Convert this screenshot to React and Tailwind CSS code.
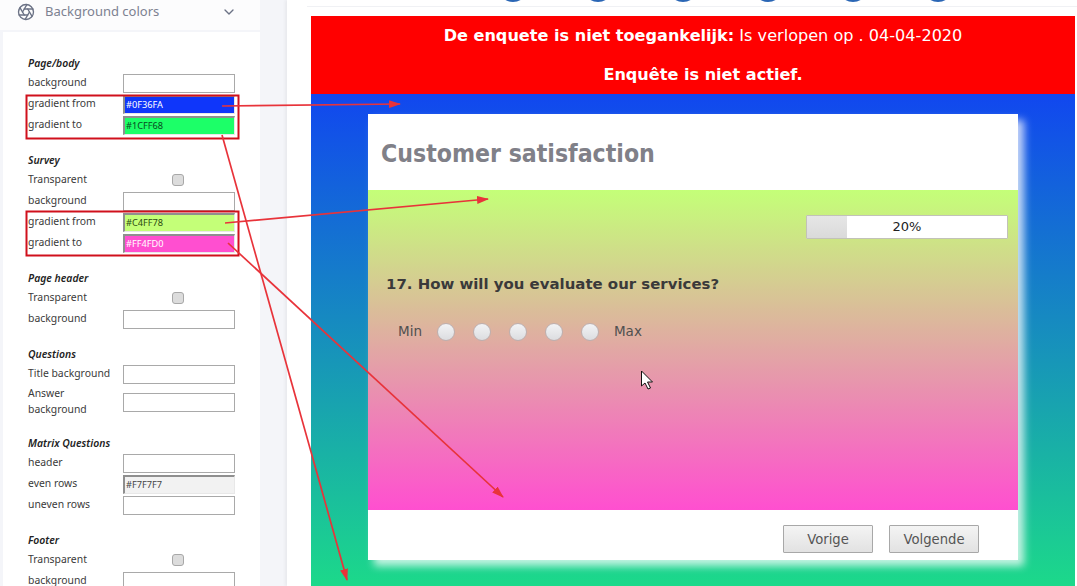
import { Aperture, ChevronDown } from "lucide-react";

function Field({ label, value, bg, text, tall }) {
  if (tall) {
    return (
      <div className="flex items-start h-[34px]">
        <div className="w-[95px] pt-[1px] leading-[16px]">{label}</div>
        <div className="w-[112px] h-[19px] mt-[9px] bg-white border border-[#a9a9a9]"></div>
      </div>
    );
  }
  return (
    <div className="flex items-end h-[21px] relative">
      <div className="w-[95px] h-[21px] flex items-center">{label}</div>
      {value ? (
        <div className={`w-[112px] h-[19px] flex items-center pl-[1px] text-[9.2px] border-t-2 border-l-2 border-t-[#8f8f8f] border-l-[#8f8f8f] border-r border-b border-r-[#e8e8e8] border-b-[#e8e8e8] ${bg} ${text}`}>
          {value}
        </div>
      ) : (
        <div className="w-[112px] h-[19px] bg-white border border-[#a9a9a9]"></div>
      )}
    </div>
  );
}

function Check() {
  return (
    <div className="flex items-center h-[21px]">
      <div className="w-[95px]">Transparent</div>
      <div className="w-[110px] flex justify-center">
        <div className="w-[12px] h-[12px] rounded-[3px] bg-[#dcdcdc] border border-[#a8a8a8]"></div>
      </div>
    </div>
  );
}

function Section({ title, children }) {
  return (
    <div className="mb-[17px]">
      <div className="h-[17px] leading-[17px] italic font-semibold text-[#222]">{title}</div>
      {children}
    </div>
  );
}

function Sidebar() {
  return (
    <div className="w-[257px] ml-[3px] shrink-0 text-[10.4px] text-[#3a3a3a] font-['Noto_Sans',sans-serif]">
      <div className="h-[30px] -ml-[3px] bg-[#fcfcfd] flex items-center justify-between pl-[17px] pr-[23px] pb-[6px] mb-[2px]">
        <div className="flex items-center gap-[10px]">
          <Aperture className="w-[18px] h-[18px] text-[#6b7285]" strokeWidth={1.8} />
          <span className="text-[13px] text-[#7c8191]">Background colors</span>
        </div>
        <ChevronDown className="w-[16px] h-[16px] text-[#6b7285]" />
      </div>
      <div className="bg-white pl-[25px] pt-[23px] pb-[20px]">
        <Section title="Page/body">
          <Field label="background" />
          <Field label="gradient from" value="#0F36FA" bg="bg-[#0f36fa]" text="text-white" />
          <Field label="gradient to" value="#1CFF68" bg="bg-[#1cff68]" text="text-[#0a4a20]" />
        </Section>
        <Section title="Survey">
          <Check />
          <Field label="background" />
          <Field label="gradient from" value="#C4FF78" bg="bg-[#c4ff78]" text="text-[#2c4a10]" />
          <Field label="gradient to" value="#FF4FD0" bg="bg-[#ff4fd0]" text="text-white" />
        </Section>
        <Section title="Page header">
          <Check />
          <Field label="background" />
        </Section>
        <Section title="Questions">
          <Field label="Title background" />
          <Field label="Answer background" tall />
        </Section>
        <Section title="Matrix Questions">
          <Field label="header" />
          <Field label="even rows" value="#F7F7F7" bg="bg-[#f2f2f2]" text="text-[#444]" />
          <Field label="uneven rows" />
        </Section>
        <Section title="Footer">
          <Check />
          <Field label="background" />
        </Section>
      </div>
    </div>
  );
}

function TopStrip() {
  return (
    <div className="h-[7px] mb-[9px] -mr-[2px] -ml-[4px] bg-white border-b border-[#f0f1f4] overflow-hidden flex justify-center gap-[55px] pl-[66px]">
      {[0, 1, 2, 3, 4, 5].map((i) => (
        <div key={i} className="w-[30px] h-[30px] -mt-[28px] rounded-full bg-[#2a66b5] shrink-0"></div>
      ))}
    </div>
  );
}

function Survey() {
  return (
    <div className="flex-1 bg-[linear-gradient(to_bottom,#1147ef,#1cd98a)] pt-[20px] px-[57px] pb-[26px]">
      <div className="bg-white h-[446px] flex flex-col shadow-[6px_6px_8px_rgba(255,255,255,0.75)]">
        <div className="h-[76px] flex items-center pl-[13px] pt-[4px] text-[24.6px] font-bold text-[#808088] font-['DejaVu_Sans_Condensed','DejaVu_Sans',sans-serif]">
          Customer satisfaction
        </div>
        <div className="flex-1 bg-[linear-gradient(to_bottom,#c4ff78,#ff4fd0)] pt-[25px] px-[18px]">
          <div className="flex justify-end -mr-[8px]">
            <div className="relative w-[202px] h-[24px] bg-white border border-[#c2c2b8] rounded-[1px] flex items-center justify-center text-[13px] text-[#222]">
              <div className="absolute left-0 top-0 bottom-0 w-[40px] bg-gradient-to-b from-[#e6e6e6] to-[#dadada]"></div>
              <span className="relative">20%</span>
            </div>
          </div>
          <div className="mt-[34px] text-[14.95px] font-bold text-[#3a3a3a]">
            17. How will you evaluate our services?
          </div>
          <div className="mt-[26px] ml-[12px] flex items-center text-[13.5px] text-[#505050]">
            <span className="mr-[15px]">Min</span>
            <div className="flex gap-[18px]">
              {[0, 1, 2, 3, 4].map((i) => (
                <div key={i} className="w-[18px] h-[18px] rounded-full bg-gradient-to-b from-[#f2f3f5] to-[#dcdde0] border border-[#bdb0b0]"></div>
              ))}
            </div>
            <span className="ml-[15px]">Max</span>
          </div>
        </div>
        <div className="h-[50px] flex items-start justify-end gap-[16px] pt-[15px] pr-[39px]">
          {["Vorige", "Volgende"].map((b) => (
            <div key={b} className="w-[90px] h-[28px] pt-[2px] flex items-center justify-center text-[13.2px] text-[#555] bg-gradient-to-b from-[#f4f4f4] to-[#e2e2e2] border border-[#a8a8a8] rounded-[1px]">
              {b}
            </div>
          ))}
        </div>
      </div>
    </div>
  );
}

function Arrows() {
  const lines = [
    [222, 106, 400, 104],
    [225, 223, 488, 199],
    [222, 135, 347, 580],
    [228, 243, 503, 497],
  ];
  return (
    <svg className="absolute inset-0 pointer-events-none" width="1077" height="586">
      <defs>
        <marker id="head" markerWidth="12" markerHeight="8" refX="11" refY="4" orient="auto" markerUnits="userSpaceOnUse">
          <path d="M0 0 L12 4 L0 8 Z" fill="#e8333a" />
        </marker>
      </defs>
      <rect x="26.5" y="95.5" width="212" height="43" fill="none" stroke="#d0101c" strokeWidth="2" />
      <rect x="26.5" y="211.5" width="212" height="44" fill="none" stroke="#d0101c" strokeWidth="2" />
      {lines.map(([x1, y1, x2, y2], i) => (
        <line key={i} x1={x1} y1={y1} x2={x2} y2={y2} stroke="#e8333a" strokeWidth="1.7" markerEnd="url(#head)" />
      ))}
      <path d="M641.5 371 L641.5 386 L645 383 L648 389 L650.5 388 L647.5 382 L652.5 382 Z" fill="#fff" stroke="#111" strokeWidth="1" />
    </svg>
  );
}

export default function App() {
  return (
    <div className="relative w-[1077px] h-[586px] overflow-hidden flex bg-[#f4f5f9]">
      <Sidebar />
      <div className="w-[27px] shrink-0"></div>
      <div className="w-[790px] shrink-0 bg-white pl-[24px] pr-[2px] flex flex-col font-['DejaVu_Sans',sans-serif] shadow-[-2px_0_3px_rgba(0,0,0,0.05)]">
        <TopStrip />
        <div className="h-[78px] bg-[#ff0000] text-white text-[16.1px] flex flex-col items-center pt-[1px] pl-[20px]">
          <div className="h-[39px] shrink-0 flex items-center">
            <b>De enquete is niet toegankelijk:</b>&nbsp;Is verlopen op . 04-04-2020
          </div>
          <div className="h-[39px] shrink-0 flex items-center font-bold">Enquête is niet actief.</div>
        </div>
        <Survey />
      </div>
      <Arrows />
    </div>
  );
}
